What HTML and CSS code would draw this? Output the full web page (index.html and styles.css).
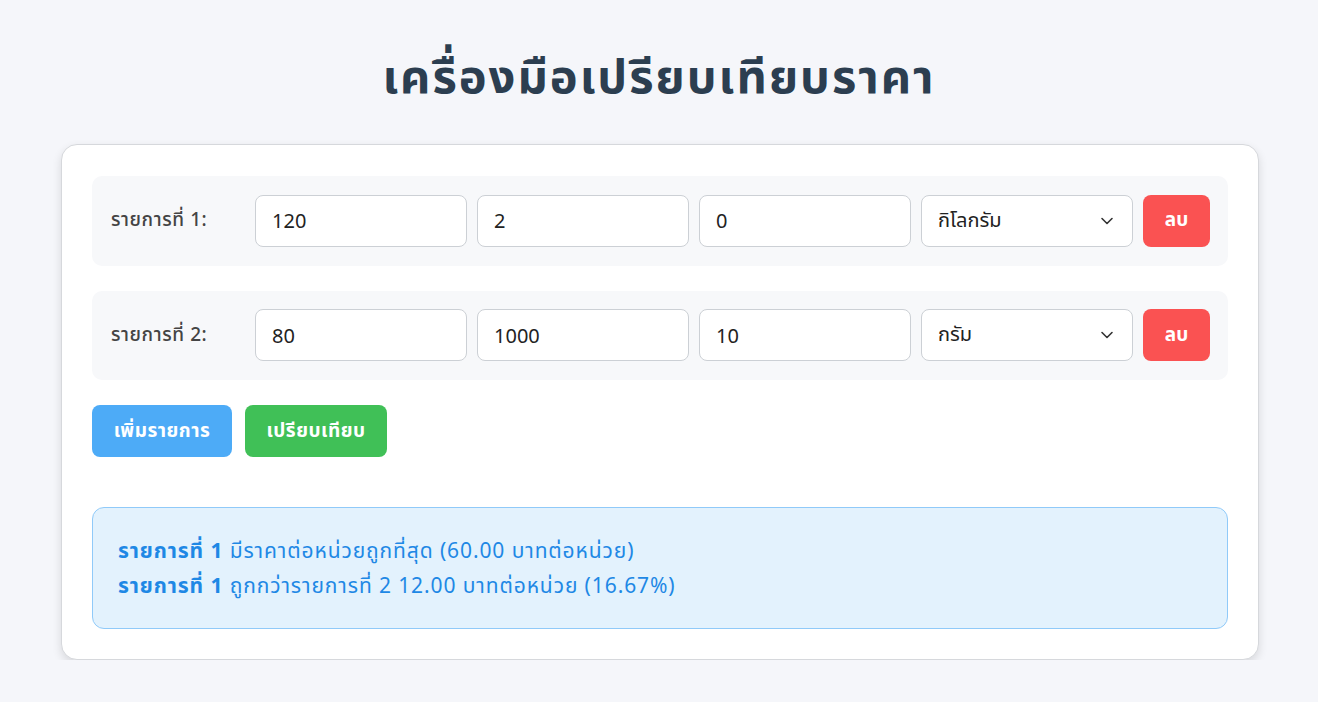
FILE: index.html
```html
<!DOCTYPE html>
<html lang="th">
<head>
<meta charset="utf-8">
<title>เครื่องมือเปรียบเทียบราคา</title>
<link rel="stylesheet" href="styles.css">
</head>
<body>
<h1 class="title">เครื่องมือเปรียบเทียบราคา</h1>
<div class="card">
  <div class="item-row">
    <label class="item-label">รายการที่ 1:</label>
    <input class="field" type="text" value="120">
    <input class="field" type="text" value="2">
    <input class="field" type="text" value="0">
    <div class="select">
      <span>กิโลกรัม</span>
      <svg class="chev" width="14" height="14" viewBox="0 0 14 14"><path d="M2 4.5 L7 9.5 L12 4.5" fill="none" stroke="#333" stroke-width="1.6" stroke-linecap="round" stroke-linejoin="round"/></svg>
    </div>
    <button class="btn-del">ลบ</button>
  </div>
  <div class="item-row">
    <label class="item-label">รายการที่ 2:</label>
    <input class="field" type="text" value="80">
    <input class="field" type="text" value="1000">
    <input class="field" type="text" value="10">
    <div class="select">
      <span>กรัม</span>
      <svg class="chev" width="14" height="14" viewBox="0 0 14 14"><path d="M2 4.5 L7 9.5 L12 4.5" fill="none" stroke="#333" stroke-width="1.6" stroke-linecap="round" stroke-linejoin="round"/></svg>
    </div>
    <button class="btn-del">ลบ</button>
  </div>
  <div class="actions">
    <button class="btn btn-add">เพิ่มรายการ</button>
    <button class="btn btn-compare">เปรียบเทียบ</button>
  </div>
  <div class="result">
    <p><strong>รายการที่ 1</strong> มีราคาต่อหน่วยถูกที่สุด (60.00 บาทต่อหน่วย)</p>
    <p><strong>รายการที่ 1</strong> ถูกกว่ารายการที่ 2 12.00 บาทต่อหน่วย (16.67%)</p>
  </div>
</div>
</body>
</html>
```
FILE: styles.css
```css
* { box-sizing: border-box; }
body {
  margin: 0;
  background: #f5f6fa;
  font-family: "Noto Sans", "Noto Sans Thai", "DejaVu Sans", sans-serif;
  color: #2c3e50;
}
.title {
  margin: 0;
  padding-top: 45px;
  height: 144px;
  text-align: center;
  font-size: 47px;
  font-weight: 700;
  letter-spacing: 2px;
  color: #2c3e50;
  line-height: 60px;
}
.card {
  width: 1198px;
  margin-left: 61px;
  background: #fff;
  border: 1px solid #d6d8dc;
  border-radius: 16px;
  padding: 31px 30px 30px;
  box-shadow: 0 4px 10px rgba(0,0,0,0.12);
}
.item-row {
  display: flex;
  align-items: center;
  gap: 10px;
  height: 89.5px;
  background: #f7f8fa;
  border-radius: 10px;
  padding: 0 19px 0 18px;
  margin-bottom: 25px;
}
.item-label {
  width: 135px;
  flex: none;
  font-size: 19px;
  font-weight: 500;
  letter-spacing: 0.6px;
  color: #444;
  padding-left: 1px;
}
.field, .select {
  width: 212px;
  flex: none;
  height: 52px;
  border: 1px solid #ccd0d5;
  border-radius: 8px;
  background: #fff;
  font-family: inherit;
  font-size: 20px;
  color: #222;
  padding: 0 16px;
}
.select {
  display: flex;
  align-items: center;
  justify-content: space-between;
  padding-right: 18px;
}
.btn-del {
  width: 67px;
  height: 52px;
  flex: none;
  border: none;
  border-radius: 8px;
  background: #fa5252;
  color: #fff;
  font-family: inherit;
  font-size: 19px;
  font-weight: 700;
}
.actions {
  display: flex;
  gap: 13px;
  margin-bottom: 50px;
}
.btn {
  height: 52px;
  border: none;
  border-radius: 8px;
  color: #fff;
  font-family: inherit;
  font-size: 19px;
  font-weight: 700;
  letter-spacing: 0.5px;
  padding: 0;
}
.btn-add { background: #4dabf7; width: 140px; }
.btn-compare { background: #40c057; width: 142px; }
.result {
  background: #e3f2fd;
  border: 1px solid #90caf9;
  border-radius: 12px;
  padding: 25px 25px;
  color: #1e88e5;
  font-size: 21px;
  letter-spacing: 0.9px;
}
.result p { margin: 0; line-height: 35px; }
.result strong { font-weight: 700; }
```
